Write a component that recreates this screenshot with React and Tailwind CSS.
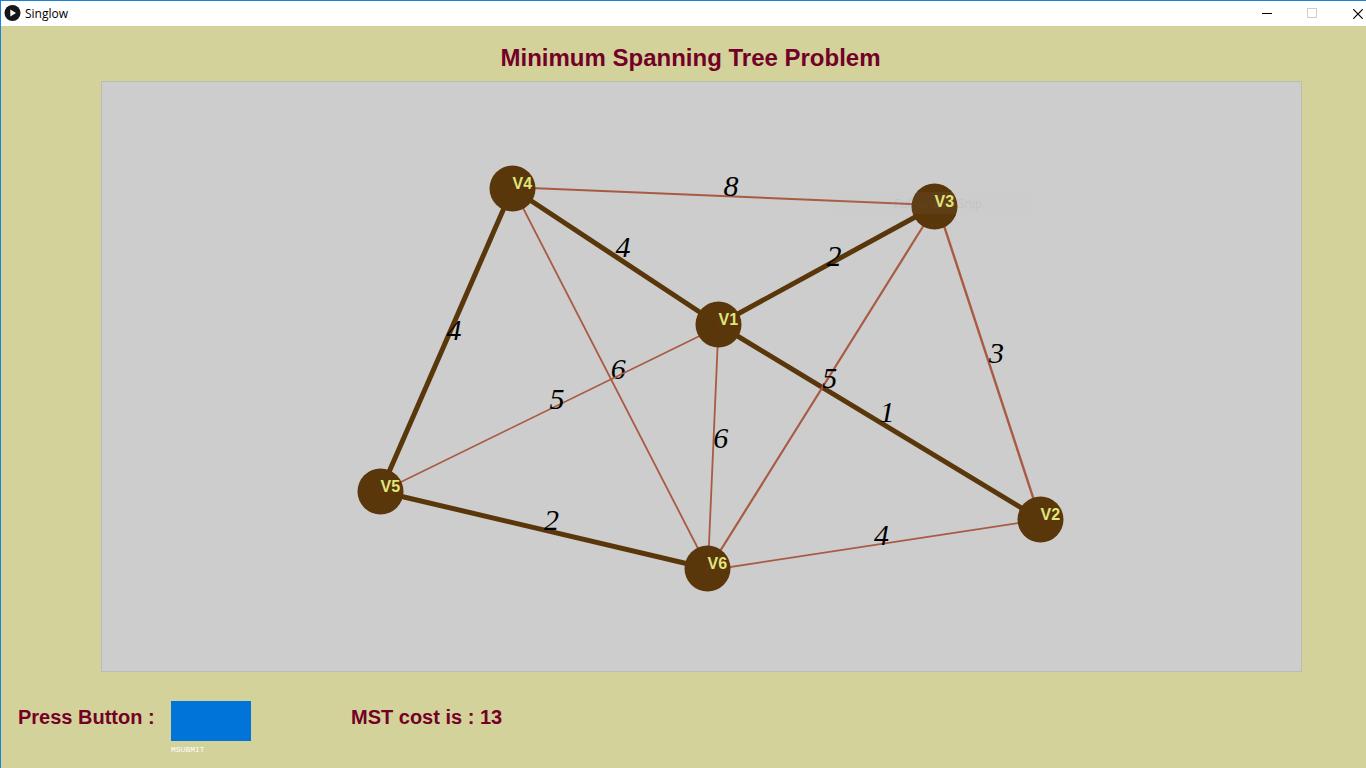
import React from "react";

const vertices = {
  V1: { x: 616.5, y: 242.5 },
  V2: { x: 938.5, y: 437.5 },
  V3: { x: 832.5, y: 124.5 },
  V4: { x: 410.5, y: 106.5 },
  V5: { x: 278.5, y: 409.5 },
  V6: { x: 605.5, y: 486.5 },
};

// Edges outside the tree may meet a vertex slightly off its centre: start and end hold those [dx, dy].
const edges = [
  { from: "V1", to: "V2", cost: 1, inTree: true },
  { from: "V1", to: "V3", cost: 2, inTree: true },
  { from: "V1", to: "V4", cost: 4, inTree: true },
  { from: "V4", to: "V5", cost: 4, inTree: true },
  { from: "V5", to: "V6", cost: 2, inTree: true },
  { from: "V4", to: "V3", cost: 8, width: 2, start: [0, -1.2], end: [0, -1.6] },
  { from: "V4", to: "V6", cost: 6, width: 1.8, start: [0.5, 0], end: [0.8, 0] },
  { from: "V5", to: "V1", cost: 5, width: 1.7, start: [0, 0.4], end: [0, 2.2] },
  { from: "V1", to: "V6", cost: 6, width: 1.8, start: [0, 1], end: [0.4, 1] },
  { from: "V3", to: "V6", cost: 5, width: 2.2, start: [1, 0], end: [1.7, 0] },
  { from: "V3", to: "V2", cost: 3, width: 2.4, start: [3.2, 0], end: [-0.2, 0] },
  { from: "V6", to: "V2", cost: 4, width: 1.8, start: [0, 2], end: [0, 0.2] },
];

const treeCost = edges.filter((e) => e.inTree).reduce((sum, e) => sum + e.cost, 0);

function TitleBar() {
  return (
    <header className="flex h-[25px] items-center justify-between bg-white pl-[3px]">
      <div className="flex items-center gap-1">
        <svg className="size-[17px]" viewBox="0 0 17 17" aria-hidden="true">
          <circle cx="8.5" cy="8" r="8" fill="#161616" />
          <path d="M6.3 4.5L12 8l-5.7 3.5z" fill="#fff" />
        </svg>
        <span className="font-['Open_Sans',sans-serif] text-xs leading-4 text-black">Singlow</span>
      </div>
      <div className="flex items-center">
        <button type="button" aria-label="Minimize" className="flex h-6 w-[45px] items-center justify-center">
          <svg className="size-[11px]" viewBox="0 0 11 11" aria-hidden="true">
            <path d="M0 5.5h10" stroke="#000" />
          </svg>
        </button>
        <button type="button" aria-label="Maximize" disabled className="flex h-6 w-[45px] items-center justify-center">
          <svg className="size-[11px]" viewBox="0 0 11 11" aria-hidden="true">
            <path d="M.5.5h9v9h-9z" fill="none" stroke="#ccc" />
          </svg>
        </button>
        <button type="button" aria-label="Close" className="flex h-6 w-[31px] items-center justify-end pr-[3px]">
          <svg className="size-[10px]" viewBox="0 0 10 10" aria-hidden="true">
            <path d="M.3.3l9.4 9.4M9.7.3L.3 9.7" stroke="#000" strokeWidth="1.2" />
          </svg>
        </button>
      </div>
    </header>
  );
}

function Graph() {
  return (
    <svg className="block h-auto w-full" viewBox="0 0 1199 589" role="img" aria-label="Weighted graph">
      {edges.map((e) => {
        const [dx1, dy1] = e.start ?? [0, 0];
        const [dx2, dy2] = e.end ?? [0, 0];
        const x1 = vertices[e.from].x + dx1;
        const y1 = vertices[e.from].y + dy1;
        const x2 = vertices[e.to].x + dx2;
        const y2 = vertices[e.to].y + dy2;
        return (
          <g key={e.from + e.to}>
            <line
              x1={x1}
              y1={y1}
              x2={x2}
              y2={y2}
              stroke={e.inTree ? "#5a360b" : "#a95a43"}
              strokeWidth={e.inTree ? 5 : e.width}
            />
            <text
              x={(x1 + x2) / 2}
              y={(y1 + y2) / 2}
              className="fill-black font-['Liberation_Serif',serif] text-[30px] italic"
            >
              {e.cost}
            </text>
          </g>
        );
      })}
      {Object.entries(vertices).map(([name, v]) => (
        <g key={name}>
          <circle cx={v.x} cy={v.y} r="23" fill="#5a360b" />
          <circle cx={v.x} cy={v.y} r="2.5" fill="#65340d" />
        </g>
      ))}
      <rect x="732" y="110" width="200" height="22" fill="#c8ccd4" fillOpacity="0.05" />
      <text x="792" y="126" className="fill-[#787878] font-['Open_Sans',sans-serif] text-xs opacity-10">
        Full-screen Snip
      </text>
      {Object.entries(vertices).map(([name, v]) => (
        <text
          key={name}
          x={v.x}
          y={v.y}
          className="fill-[#dfe67b] font-['Liberation_Sans',sans-serif] text-base font-bold"
        >
          {name}
        </text>
      ))}
    </svg>
  );
}

export default function App() {
  return (
    <div className="flex min-h-screen flex-col border-t border-l border-[#1883d7] bg-[#d3d29b] font-['Liberation_Sans',sans-serif]">
      <TitleBar />
      <main className="flex flex-col text-[#730127]">
        <h1 className="mt-4 pl-[14px] text-center text-2xl leading-8 font-bold">Minimum Spanning Tree Problem</h1>
        <section className="mt-[7px] mr-16 ml-[100px] border border-[#bdbcb0] bg-[#cdcdcd]">
          <Graph />
        </section>
        <section className="mt-[29px] flex items-start pl-[17px] text-xl leading-8 font-bold">
          <span id="press-label" className="w-[153px]">Press Button :</span>
          <div className="flex w-[180px] flex-col items-start">
            <button type="button" aria-labelledby="press-label submit-label" className="h-10 w-20 bg-[#0074d9]" />
            <span id="submit-label" className="mt-[3px] font-['Liberation_Mono',monospace] text-[8px] leading-3 font-normal text-white">
              MSUBMIT
            </span>
          </div>
          <output>MST cost is : {treeCost}</output>
        </section>
      </main>
    </div>
  );
}
